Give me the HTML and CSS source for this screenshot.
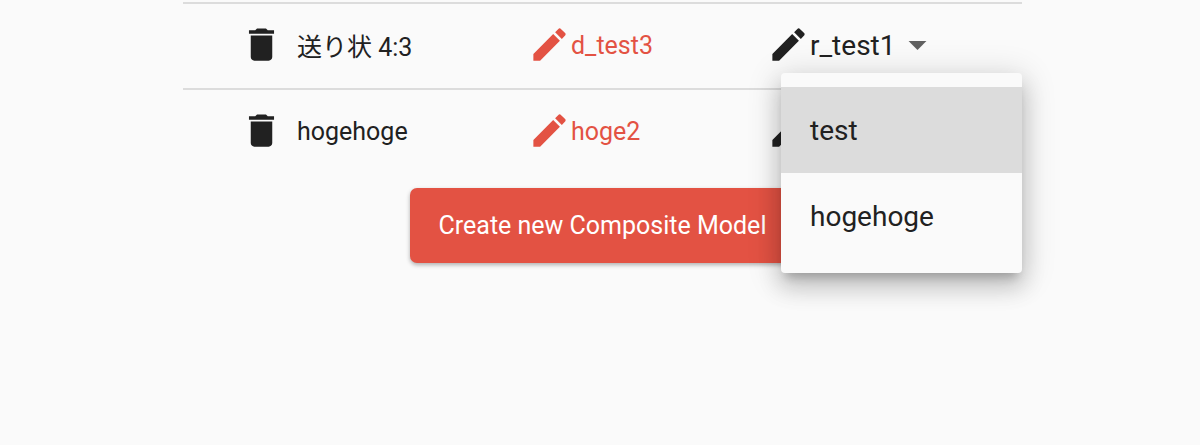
FILE: index.html
```html
<!DOCTYPE html>
<html lang="ja">
  <head>
    <meta charset="UTF-8" />
    <meta name="viewport" content="width=device-width, initial-scale=1" />
    <title>Composite Models</title>
    <link rel="stylesheet" href="styles.css">
  </head>
  <body>
    <main>
      <!-- Model list -->
      <table class="model-table">
        <tbody>
          <tr>
            <td class="name-cell">
              <div class="cell">
                <button class="icon-button" type="button" aria-label="Delete">
                  <svg class="icon" viewBox="0 0 24 24"><path d="M6 19c0 1.100.9 2 2 2h8c1.100 0 2-.9 2-2V7H6v12zM19 4h-3.500l-1-1h-5l-1 1H5v2h14V4z"/></svg>
                </button>
                <span class="name">送り状 4:3</span>
              </div>
            </td>
            <td class="detector-cell">
              <a class="cell model-link" href="#">
                <svg class="icon" viewBox="0 0 24 24"><path d="M3 17.250V21h3.750L17.810 9.940l-3.750-3.750L3 17.250zM20.710 7.040c.39-.39.39-1.020 0-1.410l-2.340-2.340c-.39-.39-1.020-.39-1.410 0l-1.830 1.830 3.750 3.750 1.830-1.830z"/></svg>
                <span>d_test3</span>
              </a>
            </td>
            <td>
              <div class="cell picker">
                <button class="icon-button" type="button" aria-label="Edit">
                  <svg class="icon" viewBox="0 0 24 24"><path d="M3 17.250V21h3.750L17.810 9.940l-3.750-3.750L3 17.250zM20.710 7.040c.39-.39.39-1.020 0-1.410l-2.340-2.340c-.39-.39-1.020-.39-1.410 0l-1.830 1.830 3.750 3.750 1.830-1.830z"/></svg>
                </button>
                <select class="model-select" aria-label="Model">
                  <option>r_test1</option>
                </select>
                <svg class="icon arrow" viewBox="0 0 24 24"><path d="M7 10l5 5 5-5z"/></svg>
                <!-- Open menu -->
                <div class="menu">
                  <button class="menu-item active" type="button">test</button>
                  <button class="menu-item" type="button">hogehoge</button>
                </div>
              </div>
            </td>
          </tr>
          <tr>
            <td class="name-cell">
              <div class="cell">
                <button class="icon-button" type="button" aria-label="Delete">
                  <svg class="icon" viewBox="0 0 24 24"><path d="M6 19c0 1.100.9 2 2 2h8c1.100 0 2-.9 2-2V7H6v12zM19 4h-3.500l-1-1h-5l-1 1H5v2h14V4z"/></svg>
                </button>
                <span class="name">hogehoge</span>
              </div>
            </td>
            <td class="detector-cell">
              <a class="cell model-link" href="#">
                <svg class="icon" viewBox="0 0 24 24"><path d="M3 17.250V21h3.750L17.810 9.940l-3.750-3.750L3 17.250zM20.710 7.040c.39-.39.39-1.020 0-1.410l-2.340-2.340c-.39-.39-1.020-.39-1.410 0l-1.830 1.830 3.750 3.750 1.830-1.830z"/></svg>
                <span>hoge2</span>
              </a>
            </td>
            <td>
              <div class="cell">
                <button class="icon-button" type="button" aria-label="Edit">
                  <svg class="icon" viewBox="0 0 24 24"><path d="M3 17.250V21h3.750L17.810 9.940l-3.750-3.750L3 17.250zM20.710 7.040c.39-.39.39-1.020 0-1.410l-2.340-2.340c-.39-.39-1.020-.39-1.410 0l-1.830 1.830 3.750 3.750 1.830-1.830z"/></svg>
                </button>
              </div>
            </td>
          </tr>
        </tbody>
      </table>

      <button class="create-button" type="button">Create new Composite Model</button>
    </main>
  </body>
</html>
```
FILE: styles.css
```css
* {
  box-sizing: border-box;
}

body {
  font-family: Roboto, "Noto Sans CJK JP", sans-serif;
  font-size: 25px;
  background: #fafafa;
  color: #212121;
  margin: 0;
}

button,
select {
  font: inherit;
  color: inherit;
  background: none;
  border: none;
  padding: 0;
  cursor: pointer;
}

main {
  display: flex;
  flex-direction: column;
  align-items: center;
  min-height: 100vh;
  padding: 2px 0 40px 5px;
}

.model-table {
  width: 70%;
  min-width: 839px;
  table-layout: fixed;
  border-collapse: separate;
  border-spacing: 0;
}

td {
  height: 86px;
  padding: 0;
  border-top: 2px solid #dcdcdc;
}

.name-cell {
  width: 345px;
  padding-left: 57px;
}

.detector-cell {
  width: 239px;
}

.cell {
  display: flex;
  align-items: center;
  height: 84px;
  padding-bottom: 2px;
}

.icon {
  display: block;
  width: 43px;
  height: 43px;
  margin-bottom: 2px;
  fill: currentColor;
}

.name {
  margin-left: 14px;
}

.model-link {
  color: #e35243;
  text-decoration: none;
}

.picker {
  position: relative;
}

.model-select {
  appearance: none;
  font-size: 28px;
}

.arrow {
  color: #616161;
}

.menu {
  position: absolute;
  top: 69px;
  left: 14px;
  right: 0;
  z-index: 1;
  padding: 14px 0;
  background: #fafafa;
  border-radius: 4px;
  box-shadow: 0 9px 9px -5px rgba(0, 0, 0, 0.2),
    0 14px 22px 2px rgba(0, 0, 0, 0.14), 0 5px 32px 4px rgba(0, 0, 0, 0.14);
}

.menu-item {
  display: block;
  width: 100%;
  height: 86px;
  padding: 0 29px;
  font-size: 28px;
  text-align: left;
}

.menu-item.active {
  background: #dcdcdc;
}

.create-button {
  height: 75px;
  margin-top: 14px;
  padding: 0 29px;
  color: white;
  background: #e35243;
  border-radius: 7px;
  box-shadow: 0 2px 4px rgba(0, 0, 0, 0.3);
}
```
